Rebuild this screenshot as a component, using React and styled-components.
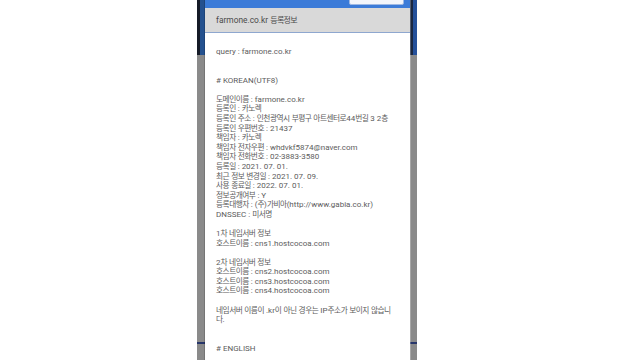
import React from "react";
import styled, { createGlobalStyle } from "styled-components";

const GlobalStyle = createGlobalStyle`
  html, body {
    margin: 0;
    padding: 0;
    background: #ffffff;
  }
  body {
    width: 640px;
    height: 360px;
    overflow: hidden;
    font-family: Roboto, "Noto Sans CJK KR", sans-serif;
  }
`;

const WHOIS = `query : farmone.co.kr


# KOREAN(UTF8)

도메인이름 : farmone.co.kr
등록인 : 카노렉
등록인 주소 : 인천광역시 부평구 아트센터로44번길 3 2층
등록인 우편번호 : 21437
책임자 : 카노렉
책임자 전자우편 : whdvkf5874@naver.com
책임자 전화번호 : 02-3883-3580
등록일 : 2021. 07. 01.
최근 정보 변경일 : 2021. 07. 09.
사용 종료일 : 2022. 07. 01.
정보공개여부 : Y
등록대행자 : (주)가비아(http://www.gabia.co.kr)
DNSSEC : 미서명

1차 네임서버 정보
호스트이름 : cns1.hostcocoa.com

2차 네임서버 정보
호스트이름 : cns2.hostcocoa.com
호스트이름 : cns3.hostcocoa.com
호스트이름 : cns4.hostcocoa.com

네임서버 이름이 .kr이 아닌 경우는 IP주소가 보이지 않습니
다.


# ENGLISH

Domain Name : farmone.co.kr`;

// Hangul glyphs in the CJK font are full-width; the device font draws them narrower
function withHangul(text) {
  return text.split(/([\u1100-\u11ff\u3130-\u318f\uac00-\ud7a3]+)/).map((part, i) =>
    i % 2 === 1 ? <Ko key={i}>{part}</Ko> : part
  );
}

export default function App() {
  return (
    <>
      <GlobalStyle />
      <Page>
        <Screen>
          <Edge side="left" />
          <Center>
            <AppBar>
              <BarButton />
            </AppBar>
            <Dialog>
              <DialogHeader>
                farmone.co.kr&nbsp;<Ko big>등록정보</Ko>
              </DialogHeader>
              <DialogBody>{withHangul(WHOIS)}</DialogBody>
            </Dialog>
          </Center>
          <Edge side="right" />
        </Screen>
      </Page>
    </>
  );
}

const Page = styled.div`
  width: 640px;
  height: 360px;
  display: flex;
  padding-left: 197px;
  box-sizing: border-box;
`;

// phone screen, dimmed app behind the dialog
const Screen = styled.div`
  display: flex;
  height: 360px;
  overflow: hidden;
`;

const Edge = styled.div`
  width: ${(p) => (p.side === "left" ? "8px" : "7px")};
  height: 100%;
  flex-shrink: 0;
  background:
    linear-gradient(
      to bottom,
      transparent 0,
      transparent 342px,
      #27366a 342px,
      #27366a 344px,
      transparent 344px
    ),
    linear-gradient(
      to bottom,
      transparent 0,
      transparent 55px,
      #8a8a8a 55px
    ),
    ${(p) =>
      p.side === "left"
        ? "linear-gradient(to right, #151b27 0, #151b27 3px, #24518f 3px)"
        : "linear-gradient(to right, #1a2740 0, #1a2740 3px, #24509a 3px)"};
  box-shadow: ${(p) =>
    p.side === "left"
      ? "inset -1px 0 0 rgba(0,0,0,0.15)"
      : "inset 1px 0 0 rgba(255,255,255,0.25)"};
`;

const Center = styled.div`
  width: 205px;
  height: 360px;
  display: flex;
  flex-direction: column;
  overflow: hidden;
`;

const AppBar = styled.div`
  height: 8px;
  flex-shrink: 0;
  background: #3b7bd8;
  display: flex;
  justify-content: flex-end;
  padding-right: 6px;
  overflow: hidden;
`;

const BarButton = styled.div`
  width: 53px;
  height: 10px;
  margin-top: -7px;
  border-radius: 2px;
  background: #f2f5fb;
  border: 1px solid #9db8e4;
`;

const Dialog = styled.div`
  flex: 1 0 auto;
  background: #ffffff;
  display: flex;
  flex-direction: column;
`;

const DialogHeader = styled.div`
  height: 23px;
  flex-shrink: 0;
  background: #d9d9d9;
  border-bottom: 1px solid #8ea7cf;
  padding: 0 11px 1px;
  display: flex;
  align-items: center;
  font-size: 8.4px;
  color: #4a4a4a;
`;

const Ko = styled.span`
  font-family: "Noto Sans CJK KR", sans-serif;
  font-size: ${(p) => (p.big ? "8px" : "7.7px")};
  letter-spacing: ${(p) => (p.big ? "-0.7px" : "-0.5px")};
  line-height: 1;
`;

const DialogBody = styled.div`
  padding: 14px 8px 0 11px;
  white-space: pre-wrap;
  word-break: break-all;
  font-size: 8px;
  line-height: 9.58px;
  color: #5c5c5c;
`;
